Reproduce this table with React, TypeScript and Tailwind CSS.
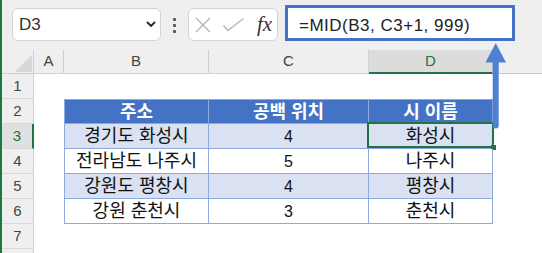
import React from "react";

const rows = [
  { addr: "경기도 화성시", pos: "4", city: "화성시" },
  { addr: "전라남도 나주시", pos: "5", city: "나주시" },
  { addr: "강원도 평창시", pos: "4", city: "평창시" },
  { addr: "강원 춘천시", pos: "3", city: "춘천시" },
];

const cols = [
  { label: "A", w: "w-[30px]" },
  { label: "B", w: "w-[145px]" },
  { label: "C", w: "w-[160px]" },
  { label: "D", w: "w-[124px]", active: true },
];

const rowNums = [1, 2, 3, 4, 5, 6, 7, 8];

const TableRow = ({ r }: { r: number }) => {
  // r = 2 is the header, 3..6 are data
  if (r < 2 || r > 6) {
    return (
      <>
        <div className="w-[145px] bg-white" />
        <div className="w-[160px] bg-white" />
        <div className="w-[124px] bg-white" />
      </>
    );
  }
  const isHead = r === 2;
  const item = rows[r - 3];
  const fill = isHead
    ? "bg-[#4472c4] text-white font-bold border-t"
    : r % 2 === 1
      ? "bg-[#d9e1f2] text-[#111]"
      : "bg-white text-[#111]";
  return (
    <>
      <div
        className={`flex w-[145px] items-center justify-center border-l border-r border-b border-[#8ea9db] text-[18px] leading-[20px] ${fill}`}
      >
        {isHead ? "주소" : item.addr}
      </div>
      <div
        className={`flex w-[160px] items-center justify-center border-r border-b border-[#8ea9db] leading-[20px] ${
          isHead ? "text-[18px]" : "pt-[1px] text-[16px]"
        } ${fill}`}
      >
        {isHead ? "공백 위치" : item.pos}
      </div>
      <div
        className={`relative flex w-[124px] items-center justify-center border-r border-b border-[#8ea9db] text-[18px] leading-[20px] ${fill}`}
      >
        {isHead ? "시 이름" : item.city}
        {r === 3 && (
          <div className="absolute -left-[2px] -right-[2px] -top-[2px] bottom-0 border-2 border-[#217346]">
            <div className="absolute -bottom-[4px] -right-[4px] h-[5px] w-[5px] bg-[#217346]" />
          </div>
        )}
      </div>
    </>
  );
};

export default function App() {
  return (
    <div className="relative h-[253px] w-[542px] overflow-hidden border-l-2 border-[#1a7a45] bg-[#efefef] font-['Liberation_Sans','Noto_Sans_CJK_KR',sans-serif]">
      {/* formula bar */}
      <div className="flex h-[50px]">
        <div className="ml-[10px] mt-[8px] flex h-[33px] w-[149px] items-center justify-between rounded-[6px] border border-[#d4d4d4] bg-white pl-[6px] pr-[4px]">
          <span className="text-[17px] leading-none text-[#333]">D3</span>
          <svg width="10" height="7" viewBox="0 0 10 7">
            <polyline points="1,1 5,5 9,1" fill="none" stroke="#222" strokeWidth="1.8" />
          </svg>
        </div>
        <div className="ml-[12px] mt-[18px] flex w-[3px] flex-col gap-[3px]">
          <span className="h-[3px] w-[3px] rounded-[1px] bg-[#555]" />
          <span className="h-[3px] w-[3px] rounded-[1px] bg-[#555]" />
          <span className="h-[3px] w-[3px] rounded-[1px] bg-[#555]" />
        </div>
        <div className="ml-[12px] mt-[8px] flex h-[33px] w-[90px] items-center rounded-[6px] border border-[#d4d4d4] bg-white pl-[6px]">
          <svg width="16" height="16" viewBox="0 0 16 16">
            <path d="M1 1 L15 15 M15 1 L1 15" stroke="#b4b4b4" strokeWidth="1.3" />
          </svg>
          <svg className="ml-[12px]" width="21" height="14" viewBox="0 0 21 14">
            <polyline points="0.5,7.5 5,12.5 20.5,0.5" fill="none" stroke="#b4b4b4" strokeWidth="1.3" />
          </svg>
          <span className="ml-[13px] font-['Liberation_Serif',serif] text-[21px] italic leading-none text-[#333]">
            fx
          </span>
        </div>
        <div className="ml-[7px] mt-[5px] h-[36px] w-[230px] border-[3px] border-[#4472c4] bg-white pl-[11px] pt-[8px]">
          <span className="block text-[17px] leading-[20px] tracking-[0.5px] text-[#222]">
            =MID(B3, C3+1, 999)
          </span>
        </div>
      </div>

      {/* column headers */}
      <div className="flex h-[24px] text-[15px] text-[#444]">
        <div className="h-[24px] w-[32px] border-r border-b border-[#d0d0d0] pl-[13px] pt-[5px]">
          <svg width="17" height="17" viewBox="0 0 17 17">
            <polygon points="17,0 17,17 0,17" fill="#d7d7d7" />
          </svg>
        </div>
        {cols.map((c) => (
          <div
            key={c.label}
            className={`flex h-[24px] items-center justify-center ${c.w} ${
              c.active
                ? "border-r border-r-[#d0d0d0] border-b-2 border-b-[#217346] bg-[#dcdcdc] text-[#217346]"
                : "border-r border-b border-[#d0d0d0]"
            }`}
          >
            {c.label}
          </div>
        ))}
        <div className="h-[24px] flex-1 border-b border-[#c8c8c8]" />
      </div>

      {/* sheet rows; row 8 is only partly in view, its number is below the edge */}
      {rowNums.map((r) => (
        <div key={r} className="flex h-[25px]">
          <div
            className={`flex w-[32px] items-center justify-center border-b border-[#d9d9d9] text-[15px] ${
              r === 3
                ? "border-r-2 border-r-[#217346] bg-[#e0e0e0] text-[#217346]"
                : "border-r border-r-[#d0d0d0] text-[#444]"
            }`}
          >
            {r < 8 ? r : ""}
          </div>
          <div className="w-[30px] bg-white" />
          <TableRow r={r} />
          <div className="flex-1 bg-white" />
        </div>
      ))}

      {/* arrow pointing from D3 up to the formula bar */}
      <svg className="pointer-events-none absolute -left-[2px] top-0" width="542" height="253" viewBox="0 0 542 253">
        <polygon points="495.7,43 485.5,62.5 506,62.5" fill="#4e80d0" />
        <path d="M492.7 61 H498.7 V125.5 A3 3 0 0 1 492.7 125.5 Z" fill="#4e80d0" />
      </svg>
    </div>
  );
}
